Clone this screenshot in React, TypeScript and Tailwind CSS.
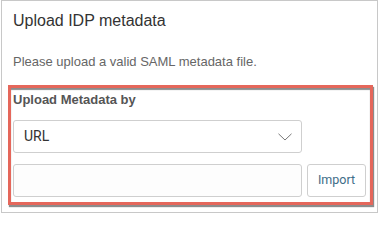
import React from "react";

export default function App() {
  return (
    <div className="w-[379px] h-[215px] bg-white pt-0 pl-[1px]" style={{ fontFamily: '"Liberation Sans", Arial, sans-serif' }}>
      <div className="w-[377px] h-[213px] border border-[#c8c8c8] bg-white pt-[10px] px-[11px]">
        <div className="text-[16px] leading-[20px] text-[#333]">Upload IDP metadata</div>
        <div className="mt-[23px] text-[13px] leading-[16px] text-[#666]">Please upload a valid SAML metadata file.</div>
        <div className="mt-[15px] ml-[-5px] mr-[-7px] border-[3px] border-[#e5675b] pl-[2px] pr-[4px] pt-[4px] pb-[5px] shadow-[1px_2px_1px_rgba(0,0,0,0.45),inset_0_2px_1px_rgba(0,0,0,0.45)]">
          <div className="text-[13px] leading-[16px] font-bold text-[#555]">Upload Metadata by</div>
          <div className="mt-[12px] w-[289px] h-[33px] border border-[#cfcfcf] rounded-[3px] bg-white flex items-center justify-between pl-[10px] pr-[9px]" style={{ fontFamily: 'Roboto, sans-serif' }}>
            <span className="text-[14px] text-[#333]">URL</span>
            <svg width="14" height="8" viewBox="0 0 14 8" fill="none">
              <path d="M0.5 0.8 L7 7 L13.5 0.8" stroke="#777" strokeWidth="1" />
            </svg>
          </div>
          <div className="mt-[11px] flex gap-[5px]">
            <div className="w-[289px] h-[33px] border border-[#cfcfcf] rounded-[3px] bg-[#fdfdfd]" />
            <button className="w-[59px] h-[33px] border border-[#cfcfcf] rounded-[3px] bg-white text-[12.5px] text-[#3e6d87]" style={{ fontFamily: 'Roboto, sans-serif' }}>Import</button>
          </div>
        </div>
      </div>
    </div>
  );
}
